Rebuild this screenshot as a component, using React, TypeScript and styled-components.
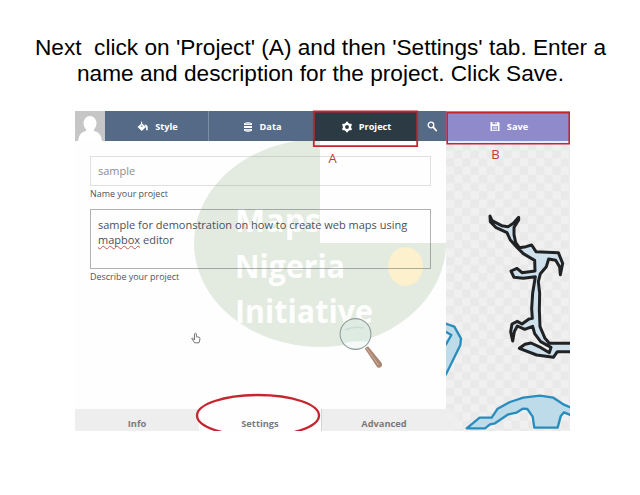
import React from "react";
import styled, { createGlobalStyle } from "styled-components";

const GlobalStyle = createGlobalStyle`
  * { box-sizing: border-box; }
  body { margin: 0; background: #fff; }
`;

const Slide = styled.main`
  width: 640px;
  height: 495px;
  overflow: hidden;
  display: flex;
  flex-direction: column;
  background: #fff;
`;

const Title = styled.h1`
  margin: 0;
  height: 111px;
  padding: 34px 0 0 1px;
  font: 400 22.65px/26px "Liberation Sans", Arial, sans-serif;
  color: #000;
  text-align: center;
  white-space: pre;
`;

const Editor = styled.section`
  position: relative;
  width: 495px;
  height: 320px;
  margin-left: 75px;
  display: grid;
  grid-template-columns: 371px 124px;
  grid-template-rows: 30px 290px;
  font-family: "Open Sans", "Noto Sans", sans-serif;
`;

const Toolbar = styled.nav`
  display: grid;
  grid-template-columns: 30px 104px 104px 104px 29px;
`;

const Avatar = styled.div`
  background: #c6c6c6;
  svg { display: block; }
`;

const ToolButton = styled.button<{ $tone?: "active" | "save"; $divided?: boolean; $gap?: number }>`
  display: flex;
  align-items: center;
  justify-content: center;
  gap: ${(p) => p.$gap ?? 6}px;
  margin: 0;
  padding: 1px 0 0 2px;
  border: 0;
  border-right: ${(p) => (p.$divided ? "1px solid #7c8ea5" : "0")};
  background: ${(p) =>
    p.$tone === "active" ? "#2c3b43" : p.$tone === "save" ? "#8f8bcb" : "#556a86"};
  color: #fff;
  font: 700 9.2px/14px "Open Sans", sans-serif;
`;

const Panel = styled.div`
  position: relative;
  display: flex;
  flex-direction: column;
  background: #fefefe;
`;

const Watermark = styled.svg`
  position: absolute;
  left: 0;
  top: 0;
`;

const Form = styled.form`
  position: relative;
  flex: 1;
  padding: 15px 15px 0;
`;

const Field = styled.div<{ $tall?: boolean }>`
  height: ${(p) => (p.$tall ? 60 : 30)}px;
  padding: ${(p) => (p.$tall ? "7px 7px" : "6px 7px")};
  border: 1px solid ${(p) => (p.$tall ? "rgba(110,115,115,.55)" : "rgba(150,155,150,.3)")};
  color: ${(p) => (p.$tall ? "#4b5157" : "#8b8e91")};
  font-size: 11px;
  line-height: 15px;
  white-space: nowrap;
`;

const Misspelled = styled.span`
  text-decoration: underline wavy #d0534f 1px;
  text-decoration-skip-ink: none;
  text-underline-offset: 1px;
`;

const Caption = styled.div`
  height: 23px;
  padding-top: 2px;
  color: #505359;
  font-size: 8.95px;
  line-height: 12px;
`;

const Tabs = styled.div`
  position: relative;
  height: 22px;
  display: grid;
  grid-template-columns: 124px 123px 124px;
`;

const Tab = styled.div<{ $current?: boolean }>`
  padding-top: 8px;
  overflow: hidden;
  background: ${(p) => (p.$current ? "#fefefe" : "#eeeeee")};
  border-right: ${(p) => (p.$current ? "1px solid #d4d4d4" : "0")};
  color: #7b7b7b;
  font-size: 9.3px;
  line-height: 14px;
  font-weight: 700;
  text-align: center;
`;

const MapView = styled.svg`
  display: block;
`;

const Annotations = styled.svg`
  position: absolute;
  left: 0;
  top: 0;
  overflow: visible;
  pointer-events: none;
`;

const BucketIcon = () => (
  <svg width="12" height="12" viewBox="0 0 12 12" fill="#fff">
    <path d="M4.600 .8v3M1.400 5.900 4.800 2.900l3.400 3-3.400 3.300z" stroke="#fff" strokeWidth="1.100" />
    <path d="M3.500 5.500h2.800L4.900 4.300z" fill="#556a86" />
    <path d="M7.500 3.500q3.200.2 3.200 2.800v3H9.100V6.600z" />
  </svg>
);

const DataIcon = () => (
  <svg width="10" height="12" viewBox="0 0 10 12" fill="#fff">
    <path d="M1 2.2q4-2 8 0v1.900H1zM1 5h8v2H1zM1 8h8v1.800q-4 1.900-8 0z" />
    <path d="M2.200 2.700h5.600M2.200 9h5.600" stroke="#8b9bb0" strokeWidth=".6" />
  </svg>
);

const GearIcon = () => (
  <svg width="12" height="12" viewBox="0 0 12 12" fill="none" stroke="#fff">
    <circle cx="6" cy="6" r="3.100" strokeWidth="2.300" />
    <path d="M6 .7v2M6 9.300v2M1.400 3.400l1.700 1M8.900 7.600l1.700 1M1.400 8.600l1.700-1M8.900 4.400l1.700-1" strokeWidth="2.100" />
  </svg>
);

const SearchIcon = () => (
  <svg width="11" height="11" viewBox="0 0 11 11" fill="none" stroke="#fff">
    <circle cx="4" cy="4" r="2.800" strokeWidth="1.300" />
    <path d="m6.200 6.200 3 3.300" strokeWidth="1.800" strokeLinecap="round" />
  </svg>
);

const SaveIcon = () => (
  <svg width="10" height="11" viewBox="0 0 10 11">
    <path d="M.5 1h8l1 1v8h-9z" fill="#fff" />
    <path d="M2.400 1.300h4.800v2H2.400zM2 5h6v4.200H2z" fill="#8f8bcb" />
    <path d="M5.400 1.300h1v1.500h-1zM2.800 5.800h4.400v.8H2.800zM2.800 7.500h4.400v.8H2.800z" fill="#fff" />
  </svg>
);

const LogoWatermark = () => (
  <Watermark width="371" height="290" viewBox="75 141 371 290">
    <path d="M320 139A126 104 0 1 0 446 243H320z" fill="#e3ebe0" />
    <ellipse cx="405.500" cy="266.500" rx="17.500" ry="19.500" fill="#fdf0cc" />
    <g fill="#fdfefd" fontFamily="Open Sans" fontWeight="700" fontSize="31.500">
      <text x="235" y="232" textLength="86" lengthAdjust="spacingAndGlyphs">Maps</text>
      <text x="235" y="278" textLength="110" lengthAdjust="spacingAndGlyphs">Nigeria</text>
      <text x="235" y="322.500" textLength="138" lengthAdjust="spacingAndGlyphs">Initiative</text>
    </g>
    <path d="m364.800 348.500 3.200-2.200 13.500 16.500q1.500 3-1 4.500t-4-1z" fill="#ab8672" />
    <path d="m366.500 348 12 17" stroke="#c8aa9a" strokeWidth="1.200" />
    <circle cx="355.500" cy="334" r="15.400" fill="#dcebe4" fillOpacity=".8" stroke="#929d9b" strokeWidth="1.100" />
    <path d="M344 343q11-3 24-1-4 6-12 6-8 0-12-5z" fill="#f5faf8" />
    <path d="M345 330q8-4 19-2" fill="none" stroke="#c9dcd7" strokeWidth="1.500" />
  </Watermark>
);

const RiverMap = () => (
  <MapView width="124" height="290" viewBox="446 141 124 290">
    <defs>
      <pattern id="checker" x="446" y="142" width="16.400" height="16.400" patternUnits="userSpaceOnUse">
        <path d="M0 0h16.400v16.400H0z" fill="#f0f0f0" />
        <path d="M0 0h8.200v8.200H0zM8.200 8.200h8.200v8.200H8.200z" fill="#e9e9e9" />
      </pattern>
    </defs>
    <path d="M446 141h124v290H446z" fill="url(#checker)" />
    <g fill="#d0e1ee" stroke="#202224" strokeWidth="9" strokeLinejoin="round" transform="translate(440 200) scale(.33333)">
      <path d="M150 48 156 62 185 77 204 80 220 70 236 52 236 60 222 82 222 104 227 128 238 143 258 140 275 135 288 155 355 158 368 190 361 224 359 201 347 181 326 177 319 200 301 221 295 245 299 280 298 330 300 380 315 415 328 430H400V455H352L340 472 290 465 238 445 255 433 273 429 303 443 328 458 333 442 302 425 284 401 278 379 254 388 232 378 223 395 218 423 212 395 216 372 232 364 246 372 267 357 277 355 275 326 278 279 286 230 250 235 222 232 213 213 231 205 246 218 285 213 284 181 250 161 232 143 211 120 201 98 167 82 151 65z" />
    </g>
    <g fill="#bedbe9" stroke="#288dbc" strokeWidth="7" strokeLinejoin="round" transform="translate(440 310) scale(.33333)">
      <path d="M-10 34 20 42 43 50 63 86 61 105 18 193 -10 225V120L18 103 34 75 18 66-10 62z" />
      <path d="M80 355 119 323H155L173 296 210 276 250 263 300 257 340 263 372 284 405 298V322L389 314 372 307 362 319 353 353H283L278 320 262 297 248 296 229 308 205 313 165 340 150 343 135 355z" />
    </g>
    <path d="M446 408h4q7 1 9 10v13h-13z" fill="#eeeeee" opacity=".7" />
  </MapView>
);

export default function App() {
  return (
    <Slide>
      <GlobalStyle />
      <Title>{"Next  click on 'Project' (A) and then 'Settings' tab. Enter a\nname and description for the project. Click Save."}</Title>
      <Editor>
        <Toolbar>
          <Avatar>
            <svg width="30" height="30" viewBox="0 0 30 30" fill="#fff">
              <ellipse cx="15" cy="12.500" rx="6.500" ry="7.500" />
              <path d="M11 16h8v4q7 1 8 10H3q1-9 8-10z" />
            </svg>
          </Avatar>
          <ToolButton $divided><BucketIcon />Style</ToolButton>
          <ToolButton $gap={7}><DataIcon />Data</ToolButton>
          <ToolButton $tone="active"><GearIcon />Project</ToolButton>
          <ToolButton><SearchIcon /></ToolButton>
        </Toolbar>
        <ToolButton $tone="save" $gap={7}><SaveIcon />Save</ToolButton>
        <Panel>
          <LogoWatermark />
          <Form>
            <Field>sample</Field>
            <Caption>Name your project</Caption>
            <Field $tall>
              sample for demonstration on how to create web maps using<br />
              <Misspelled>mapbox</Misspelled> editor
            </Field>
            <Caption>Describe your project</Caption>
          </Form>
          <Tabs>
            <Tab>Info</Tab>
            <Tab $current>Settings</Tab>
            <Tab>Advanced</Tab>
          </Tabs>
        </Panel>
        <RiverMap />
        <Annotations width="495" height="320" viewBox="75 111 495 320">
          <defs>
            <clipPath id="frame"><path d="M75 105h495v326H75z" /></clipPath>
          </defs>
          <g clipPath="url(#frame)" fill="none" stroke="#c4262f">
            <path d="M313.800 111.500h103.400v34.700H313.800z" strokeWidth="1.800" />
            <path d="M447.200 112.800h122v31H447.200z" strokeWidth="1.600" />
            <ellipse cx="258" cy="415.500" rx="61" ry="20.500" strokeWidth="2.300" />
          </g>
          <g fill="#c7383b" fontFamily="Open Sans" fontSize="13">
            <text x="328.500" y="163">A</text>
            <text x="491.300" y="159">B</text>
          </g>
          <path
            d="M194.500 340v-6.200q1-1.200 1.900 0v3l2.800.4q1.100.8.600 2.800l-.8 2.800h-4.300l-3-4.300q.3-1.500 2.800 1.500z"
            fill="#fff"
            stroke="#666"
            strokeWidth=".9"
          />
        </Annotations>
      </Editor>
    </Slide>
  );
}
